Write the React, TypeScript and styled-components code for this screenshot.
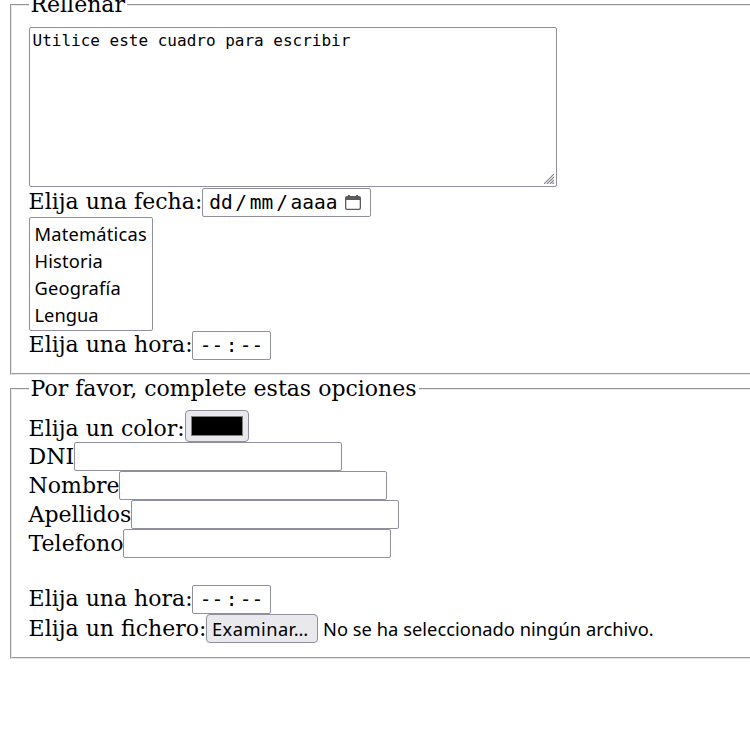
import React from "react";
import styled, { createGlobalStyle } from "styled-components";

const GlobalStyle = createGlobalStyle`
  * { box-sizing: border-box; }
  html, body { margin: 0; background: #fff; overflow: hidden; }
`;

const Page = styled.main`
  height: 750px;
  overflow: hidden;
  padding-left: 10px;
  color: #000;
  font: 22px/26px "DejaVu Serif", serif;
`;

const Group = styled.fieldset<{ $height: number; $top: number; $pad: number }>`
  width: 760px;
  height: ${(p) => p.$height}px;
  margin: ${(p) => p.$top}px 0 0;
  padding: ${(p) => p.$pad}px 0 0 17px;
  border: 2px groove #e9e9ed;
`;

const Legend = styled.legend`
  height: 26px;
  padding: 0 2px 0 1.5px;
  white-space: nowrap;
`;

const Row = styled.div<{ $height?: number; $gap?: number }>`
  display: flex;
  height: ${(p) => p.$height ?? 29}px;
  margin-top: ${(p) => p.$gap ?? 0}px;
`;

const Label = styled.label<{ $width: number; $drop?: number }>`
  width: ${(p) => p.$width}px;
  flex: none;
  white-space: nowrap;
  text-indent: -0.4px;
  padding-top: ${(p) => p.$drop ?? 1}px;
`;

const Box = styled.div`
  border: 1px solid #8f8f9d;
  border-radius: 2px;
  background: #fff;
`;

const TextArea = styled(Box)`
  display: flex;
  justify-content: space-between;
  width: 528px;
  height: 160px;
  padding: 3px 2px 1px 2.5px;
  font: 16px/20px "DejaVu Sans Mono", monospace;
`;

const Grip = styled.svg`
  width: 10px;
  height: 10px;
  align-self: flex-end;
  margin-bottom: 1px;
`;

const DateBox = styled(Box)`
  display: flex;
  align-items: center;
  width: 169px;
  height: 29px;
  padding-left: 6px;
  font: 19.5px/27px "DejaVu Sans Mono", monospace;
`;

const Part = styled.span<{ $width: number }>`
  width: ${(p) => p.$width}px;
  text-align: center;
  white-space: nowrap;
`;

const CalendarIcon = styled.svg`
  width: 16px;
  height: 16px;
  margin-left: 7px;
`;

const TimeBox = styled(DateBox)`
  width: 79px;
`;

const List = styled(Box)`
  width: 124px;
  height: 114px;
  padding: 2px 4.5px;
  font: 18.3px/27px "Noto Sans", sans-serif;
`;

const Option = styled.div<{ $spacing: number }>`
  height: 27px;
  white-space: nowrap;
  letter-spacing: ${(p) => p.$spacing}px;
`;

const ColorButton = styled.div`
  width: 64px;
  height: 32px;
  padding: 5px;
  border: 1px solid #8f8f9d;
  border-radius: 4px;
  background: #e9e9ed;
`;

const Swatch = styled.div`
  width: 52px;
  height: 20px;
  border: 1px solid #808080;
  background: #000;
`;

const Field = styled(Box)`
  width: 268px;
  height: 29px;
`;

const FileButton = styled.div`
  width: 112px;
  height: 29px;
  padding-left: 5px;
  border: 1px solid #8f8f9d;
  border-radius: 4px;
  background: #e9e9ed;
  font: 18.3px/28px "Noto Sans", sans-serif;
  letter-spacing: 0.45px;
  white-space: nowrap;
`;

const FileName = styled.span`
  padding-left: 5px;
  font: 18.3px/30px "Noto Sans", sans-serif;
  letter-spacing: 0.04px;
  white-space: nowrap;
`;

const subjects: [string, number][] = [
  ["Matemáticas", 0.2],
  ["Historia", 0.15],
  ["Geografía", 0.2],
  ["Lengua", 0],
];

const fields: [string, number][] = [
  ["DNI", 45],
  ["Nombre", 90],
  ["Apellidos", 102],
  ["Telefono", 94],
];

const TimeInput = () => (
  <TimeBox>
    <Part $width={25}>--</Part>
    <Part $width={15}>:</Part>
    <Part $width={25}>--</Part>
  </TimeBox>
);

export default function App() {
  return (
    <Page>
      <GlobalStyle />
      <Group $height={383} $top={-8} $pad={9}>
        <Legend>Rellenar</Legend>
        <TextArea>
          <span>Utilice este cuadro para escribir</span>
          <Grip viewBox="0 0 10 10" stroke="#888" strokeWidth="1.2">
            <path d="M0 10L10 0M3 10L10 3M6 10L10 6M8.5 10L10 8.5" />
          </Grip>
        </TextArea>
        <Row $gap={1}>
          <Label $width={173}>Elija una fecha:</Label>
          <DateBox>
            <Part $width={24}>dd</Part>
            <Part $width={16}>/</Part>
            <Part $width={25}>mm</Part>
            <Part $width={16}>/</Part>
            <Part $width={48}>aaaa</Part>
            <CalendarIcon viewBox="0 0 16 16">
              <path
                fill="#5b5b5f"
                fillRule="evenodd"
                d="M3 0h2v1h6V0h2v1h1a2 2 0 0 1 2 2v10a2 2 0 0 1-2 2H2a2 2 0 0 1-2-2V3a2 2 0 0 1 2-2h1zM1.3 5v7.8q0 1 1 1h11.4q1 0 1-1V5z"
              />
            </CalendarIcon>
          </DateBox>
        </Row>
        <List>
          {subjects.map(([name, spacing]) => (
            <Option key={name} $spacing={spacing}>{name}</Option>
          ))}
        </List>
        <Row>
          <Label $width={163}>Elija una hora:</Label>
          <TimeInput />
        </Row>
      </Group>
      <Group $height={283} $top={1} $pad={8}>
        <Legend>Por favor, complete estas opciones</Legend>
        <Row $height={32}>
          <Label $width={156} $drop={6}>Elija un color:</Label>
          <ColorButton><Swatch /></ColorButton>
        </Row>
        {fields.map(([name, width]) => (
          <Row key={name}>
            <Label $width={width} $drop={2}>{name}</Label>
            <Field />
          </Row>
        ))}
        <Row $gap={27}>
          <Label $width={163}>Elija una hora:</Label>
          <TimeInput />
        </Row>
        <Row>
          <Label $width={177} $drop={2}>Elija un fichero:</Label>
          <FileButton>Examinar…</FileButton>
          <FileName>No se ha seleccionado ningún archivo.</FileName>
        </Row>
      </Group>
    </Page>
  );
}
